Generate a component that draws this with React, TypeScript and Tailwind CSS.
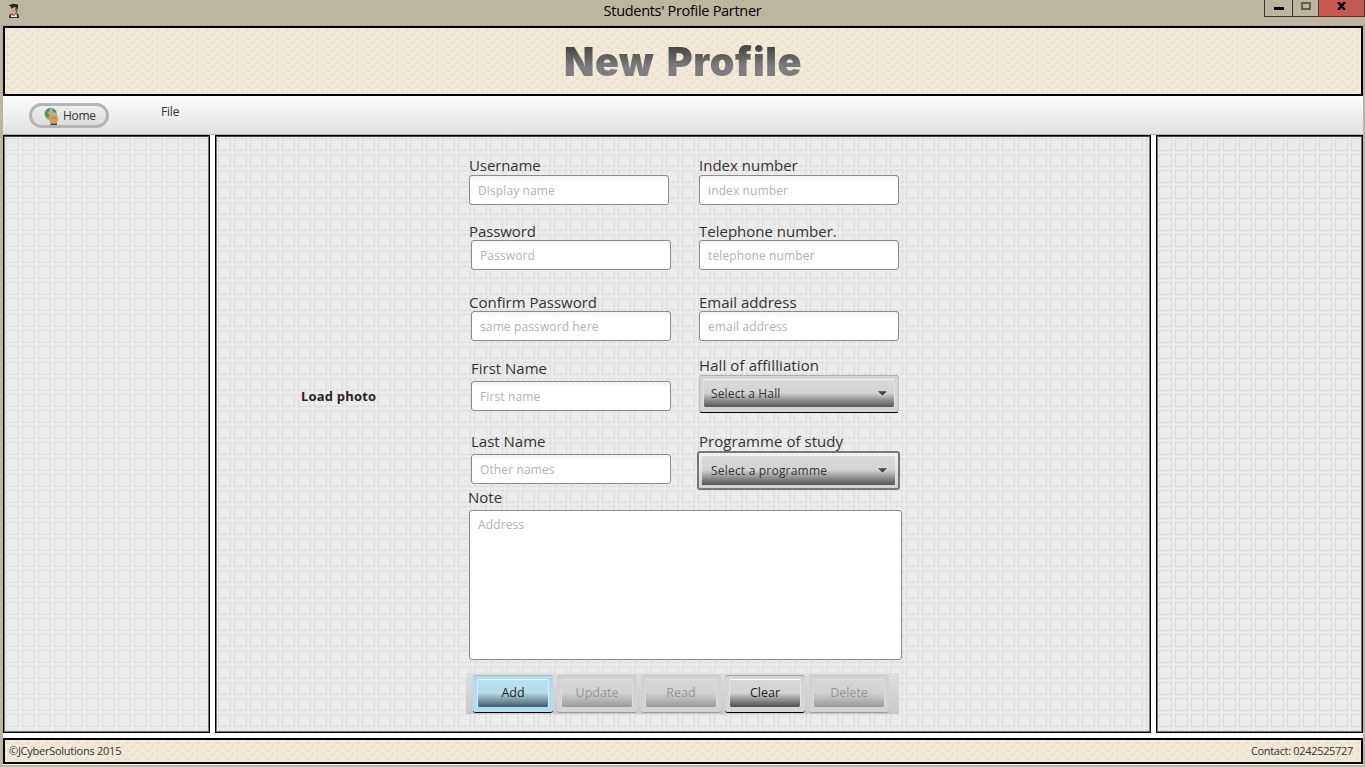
import { useId, type ReactNode } from "react";

function GridPattern() {
  const id = useId();
  return (
    <svg className="pointer-events-none absolute inset-0 h-full w-full" aria-hidden="true">
      <defs>
        <pattern id={id} x="2" y="2" width="16" height="16" patternUnits="userSpaceOnUse">
          <rect width="16" height="16" fill="#ebebeb" />
          <path
            d="M0 .5H13M0 12.5H13M.5 0V13M12.5 0V13"
            stroke="#d9d9d9"
            strokeWidth="1"
            strokeDasharray="4 1"
            fill="none"
            shapeRendering="crispEdges"
          />
        </pattern>
      </defs>
      <rect width="100%" height="100%" fill={`url(#${id})`} />
    </svg>
  );
}

function WeavePattern() {
  const id = useId();
  return (
    <svg className="pointer-events-none absolute inset-0 h-full w-full" aria-hidden="true">
      <defs>
        <pattern id={id} width="10" height="8" patternUnits="userSpaceOnUse">
          <rect width="10" height="8" fill="#f1ead6" />
          <path
            d="M2.5 0V2.5M0 4L2.5 2.5L5 4M7.5 4V6.5M5 8L7.5 6.5L10 8"
            stroke="#e8e0cd"
            strokeWidth="1.2"
            fill="none"
          />
        </pattern>
      </defs>
      <rect width="100%" height="100%" fill={`url(#${id})`} />
    </svg>
  );
}

function Pane({ className, children }: { className: string; children?: ReactNode }) {
  return (
    <section className={`relative border border-black ${className}`}>
      <GridPattern />
      <div className="pointer-events-none absolute inset-0 border border-[#777] border-t-[#444]" />
      {children}
    </section>
  );
}

function Label({ className = "", children }: { className?: string; children: ReactNode }) {
  return (
    <div className={`h-[18px] shrink-0 text-[15px] leading-[18px] whitespace-nowrap text-[#333] ${className}`}>
      {children}
    </div>
  );
}

function Field({ placeholder, className = "" }: { placeholder: string; className?: string }) {
  return (
    <input
      placeholder={placeholder}
      className={`block h-[30px] w-[200px] shrink-0 rounded-[3px] border border-[#8c8c8c] bg-linear-to-b from-[#f4f4f4] to-white to-20% px-2 text-[12px] tracking-[0.12px] outline-none placeholder:text-[#b2b2b2] ${className}`}
    />
  );
}

function Arrow() {
  return (
    <svg width="9" height="6" viewBox="0 0 9 6" aria-hidden="true">
      <path d="M0 1.5H9L4.5 6Z" fill="#e8e8e8" />
      <path d="M0 .3H9L4.5 5Z" fill="#444" />
    </svg>
  );
}

function ToolButton({ label, variant = "normal" }: { label: string; variant?: "normal" | "primary" | "disabled" }) {
  const outer = {
    normal: "bg-[#d5d5d5] border-t-[#a5a5a5] border-b-black",
    primary: "bg-[#b1ddee] border-t-[#93bfd0] border-b-black",
    disabled: "bg-[#d3d3d3] border-t-[#c4c4c4] border-b-[#9c9c9c]",
  }[variant];
  const inner = {
    normal: "border-t-white border-x-[#e3e3e3] from-[#d9d9d9] via-[#d3d3d3] to-[#4f4f4f] text-[#222]",
    primary: "border-t-[#eafaff] border-x-[#d0edf8] from-[#badff0] via-[#b6dbeb] to-[#445d68] text-[#222]",
    disabled: "border-t-[#e2e2e2] border-x-[#dadada] from-[#d7d7d7] via-[#d1d1d1] to-[#9a9a9a] text-[#969696]",
  }[variant];
  return (
    <button
      disabled={variant === "disabled"}
      className={`h-[38px] w-20 rounded-[3px] border-y px-1 pt-[3px] pb-[5px] ${outer}`}
    >
      <span
        className={`flex h-[28px] items-center justify-center rounded-[2px] border-x border-t bg-linear-to-b via-48% text-[12.5px] ${inner}`}
      >
        {label}
      </span>
    </button>
  );
}

function GraduateIcon() {
  return (
    <svg width="14" height="16" viewBox="0 0 14 16" aria-hidden="true">
      <path d="M2.5 5H9V9L7.5 12H5L3 9Z" fill="#dfa27c" />
      <path d="M7 5H9.5V9L8 10Z" fill="#8d553c" />
      <path d="M1 2L5 .8L10 1.5V4.5L9.5 6L7 4L3 5.5V3.5L1 3Z" fill="#292725" />
      <path d="M1 14C1 11.5 2.5 10.8 4 10.5L5.5 12.5L8 10C10 10.5 11 11 11 15H1Z" fill="#343434" />
      <path d="M3 11.2L5.5 13L8.5 10.5L9 14H3Z" fill="#e5e8e8" />
    </svg>
  );
}

function HomeIcon() {
  return (
    <svg width="15" height="18" viewBox="0 0 15 18" aria-hidden="true">
      <circle cx="6.7" cy="7" r="6.4" fill="#a9b5a8" />
      <path d="M1 7C1 3 4 1 6 1.5L5 5L7 7L5 11L3 12ZM8 1.5C11 2 12 4 12.4 6L9 5Z" fill="#47935a" />
      <path d="M3.5 5L5.5 4.5L8.5 8L13.5 8.7L14.3 12.5L12.5 17H7L5.5 13.5L2.5 11L4 9.8L6 11Z" fill="#d99e58" />
      <path d="M9 9.5V12M11.3 9.7V12" stroke="#a46d30" strokeWidth=".7" />
      <path d="M6.5 16.5H13V18H6.5Z" fill="#2449a8" />
    </svg>
  );
}

export default function App() {
  return (
    <div className="flex h-[767px] w-[1365px] flex-col overflow-hidden bg-[#beb59e] font-['Open_Sans','Noto_Sans',sans-serif] text-[#333]">
      <header className="grid h-[26px] shrink-0 grid-cols-[1fr_auto_1fr] items-start border-b border-[#a9a59a]">
        <div className="pt-[3px] pl-2">
          <GraduateIcon />
        </div>
        <h1 className="text-[14.5px] leading-[22px] tracking-[-0.3px] text-black">Students' Profile Partner</h1>
        <div className="flex justify-end">
          <button className="flex h-[17px] w-[28px] justify-center border-b border-l border-[#333] pt-[7px]">
            <span className="h-[3px] w-[10px] bg-black" />
          </button>
          <button className="flex h-[17px] w-[26px] justify-center border-b border-l border-[#333] pt-[2px]">
            <span className="h-[8px] w-[10px] border-2 border-[#665f50]" />
          </button>
          <button className="flex h-[17px] w-[47px] justify-center border-r border-b border-l border-[#503533] bg-[#c45a51] pt-[2px]">
            <svg width="9" height="8" viewBox="0 0 9 8" aria-hidden="true">
              <path d="M1 0L8 8M8 0L1 8" stroke="#000" strokeWidth="2.4" />
            </svg>
          </button>
        </div>
      </header>

      <main className="ml-[3px] flex w-[1360px] flex-col bg-white">
        <div className="relative flex h-[70px] items-center justify-center border-2 border-black">
          <WeavePattern />
          <h2 className="relative mt-[2px] bg-linear-to-b from-[#484848] from-20% to-[#7d7d7d] to-60% bg-clip-text font-['Inter'] text-[39.5px] leading-[48px] font-black tracking-[0.6px] [word-spacing:4px] whitespace-nowrap text-transparent">
            New Profile
          </h2>
        </div>

        <nav className="flex h-[39px] items-start border-b border-[#b3b3b3] bg-linear-to-b from-[#fdfdfd] to-[#e1e1e1]">
          <button className="mt-[7px] ml-[26px] flex h-[25px] w-[80px] items-center rounded-full border-3 border-[#b4b4b4] bg-linear-to-b from-[#eeeeee] to-[#dcdcdc] pl-[12px] text-[12px] tracking-[-0.3px]">
            <HomeIcon />
            <span className="ml-[4px]">Home</span>
          </button>
          <span className="mt-[7px] ml-[52px] text-[12px] leading-[18px] tracking-[-0.2px]">File</span>
        </nav>

        <div className="flex h-[598px] gap-[5px]">
          <Pane className="w-[207px]" />
          <Pane className="flex w-[936px] pt-px pl-px">
            <div className="relative mt-[250px] ml-[84px] w-[168px] text-[13px] leading-[18px] font-bold tracking-[0.2px] text-[#2b2323]">
              Load photo
            </div>
            <div className="relative flex w-[433px] flex-col pt-[19px]">
              <div className="flex gap-[30px]">
                <div className="flex h-[332px] w-[200px] flex-col">
                  <Label className="tracking-[-0.1px]">Username</Label>
                  <Field className="mt-px" placeholder="Display name" />
                  <Label className="mt-[17px] tracking-[-0.1px]">Password</Label>
                  <Field className="ml-[2px]" placeholder="Password" />
                  <Label className="mt-[23px]">Confirm Password</Label>
                  <Field className="ml-[2px]" placeholder="same password here" />
                  <Label className="mt-[18px] ml-[2px]">First Name</Label>
                  <Field className="mt-1 ml-[2px]" placeholder="First name" />
                  <Label className="mt-[21px] ml-[2px]">Last Name</Label>
                  <Field className="mt-1 ml-[2px]" placeholder="Other names" />
                </div>
                <div className="flex h-[332px] w-[200px] flex-col">
                  <Label>Index number</Label>
                  <Field className="mt-px" placeholder="index number" />
                  <Label className="mt-[17px]">Telephone number.</Label>
                  <Field placeholder="telephone number" />
                  <Label className="mt-[23px]">Email address</Label>
                  <Field placeholder="email address" />
                  <Label className="mt-[15px] tracking-[0.1px]">Hall of affilliation</Label>
                  <button className="mt-px h-[38px] w-[200px] shrink-0 rounded-[3px] border border-x-[#c0c0c0] border-t-[#b0b0b0] border-b-black bg-[#d5d5d5] px-[3px] pt-[3px] pb-[5px]">
                    <span className="flex h-[28px] items-center justify-between rounded-[2px] border-x border-t border-x-[#e4e4e4] border-t-[#f3f3f3] bg-linear-to-b from-[#dadada] via-[#d3d3d3] via-48% to-[#555] px-[7px] text-[12px] tracking-[0.15px] text-[#333]">
                      Select a Hall <Arrow />
                    </span>
                  </button>
                  <Label className="mt-[19px] tracking-[0.05px]">Programme of study</Label>
                  <button className="mt-px -ml-[2px] h-[39px] w-[203px] shrink-0 rounded-[3px] border-2 border-[#777] bg-linear-to-b from-[#f1f1f1] to-[#d2d2d2] px-[3px] py-[3px]">
                    <span className="flex h-[29px] items-center justify-between bg-linear-to-b from-[#dadada] via-[#d3d3d3] via-48% to-[#555] pr-[8px] pl-[9px] text-[12px] tracking-[0.2px] text-[#333]">
                      Select a programme <Arrow />
                    </span>
                  </button>
                </div>
              </div>
              <Label className="-ml-px">Note</Label>
              <textarea
                placeholder="Address"
                className="mt-1 block h-[150px] w-[433px] resize-none rounded-[3px] border border-[#8c8c8c] bg-white px-2 pt-[5px] text-[12px] leading-[18px] tracking-[0.12px] outline-none placeholder:text-[#b2b2b2]"
              />
              <div className="mt-[13px] -ml-[3px] flex h-[41px] w-[433px] gap-1 bg-linear-to-b from-[#dedede] to-[#c9c9c9] pt-[2px] pl-[7px]">
                <ToolButton label="Add" variant="primary" />
                <ToolButton label="Update" variant="disabled" />
                <ToolButton label="Read" variant="disabled" />
                <ToolButton label="Clear" />
                <ToolButton label="Delete" variant="disabled" />
              </div>
            </div>
          </Pane>
          <Pane className="w-[207px]" />
        </div>

        <footer className="relative mt-[5px] flex h-[26px] items-center justify-between border-2 border-black px-1 text-[11px] tracking-[-0.25px]">
          <WeavePattern />
          <span className="relative">©JCyberSolutions 2015</span>
          <span className="relative mr-[4px] tracking-[-0.32px]">Contact: 0242525727</span>
        </footer>
        <div className="h-px bg-white" />
      </main>
    </div>
  );
}
